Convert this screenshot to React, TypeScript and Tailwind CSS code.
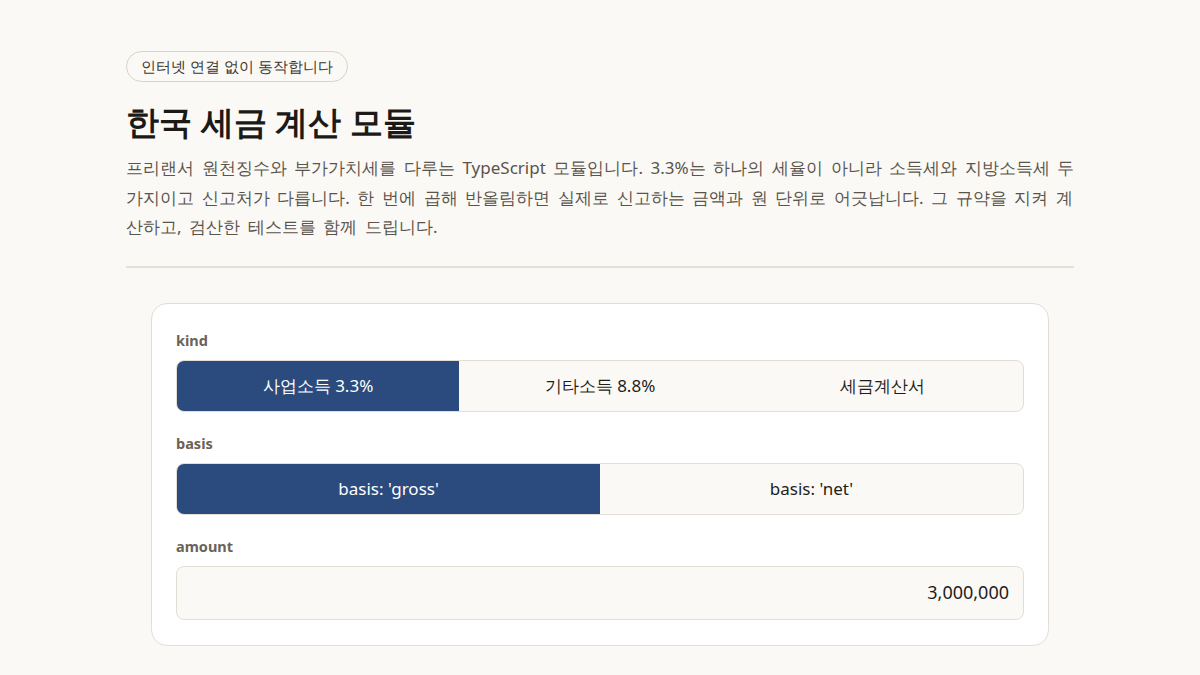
import React from "react";

function Segmented({ options, selected }: { options: string[]; selected: number }) {
  return (
    <div
      className={`grid ${options.length === 3 ? "grid-cols-3" : "grid-cols-2"} h-[52px] overflow-hidden rounded-lg border border-[#e2ded6] bg-[#faf9f6]`}
    >
      {options.map((o, i) => (
        <div
          key={o}
          className={`flex items-center justify-center text-[17px] ${
            i === selected ? "bg-[#2b4b7e] text-white" : "text-[#1f1d1a]"
          }`}
        >
          {o}
        </div>
      ))}
    </div>
  );
}

export default function App() {
  return (
    <div className="min-h-screen bg-[#faf9f6] font-['Noto_Sans',sans-serif] text-[#1f1d1a]">
      <div className="mx-auto w-[948px] pt-[51px]">
        <div className="inline-flex h-[31px] items-center rounded-full border border-[#d8d3cb] px-[14px] text-[15px] text-[#3b3631]">
          인터넷 연결 없이 동작합니다
        </div>
        <h1 className="mt-[20px] text-[33px] font-bold leading-[40px] text-[#1c1a17]">한국 세금 계산 모듈</h1>
        <p className="mt-[11px] whitespace-nowrap text-[17px] leading-[29.5px] text-[#5b544c] [word-spacing:3.2px]">
          프리랜서 원천징수와 부가가치세를 다루는 TypeScript 모듈입니다. 3.3%는 하나의 세율이 아니라 소득세와 지방소득세 두
          <br />
          가지이고 신고처가 다릅니다. 한 번에 곱해 반올림하면 실제로 신고하는 금액과 원 단위로 어긋납니다. 그 규약을 지켜 계
          <br />
          산하고, 검산한 테스트를 함께 드립니다.
        </p>
        <div className="mt-[24px] h-[2px] bg-[#e4e0d9]" />
        <div className="mx-[25px] mt-[35px] rounded-[16px] border border-[#e2ded6] bg-white px-6 pt-6 pb-[25px]">
          <div className="flex flex-col gap-[19px]">
            <div>
              <div className="mb-2 text-[14.5px] font-bold leading-6 text-[#6b6258]">kind</div>
              <Segmented options={["사업소득 3.3%", "기타소득 8.8%", "세금계산서"]} selected={0} />
            </div>
            <div>
              <div className="mb-2 text-[14.5px] font-bold leading-6 text-[#6b6258]">basis</div>
              <Segmented options={["basis: 'gross'", "basis: 'net'"]} selected={0} />
            </div>
            <div>
              <div className="mb-2 text-[14.5px] font-bold leading-6 text-[#6b6258]">amount</div>
              <div className="flex h-[54px] items-center justify-end rounded-lg border border-[#e2ded6] bg-[#faf9f6] px-[14px] text-[18px] text-[#1f1d1a]">
                3,000,000
              </div>
            </div>
          </div>
        </div>
      </div>
    </div>
  );
}
